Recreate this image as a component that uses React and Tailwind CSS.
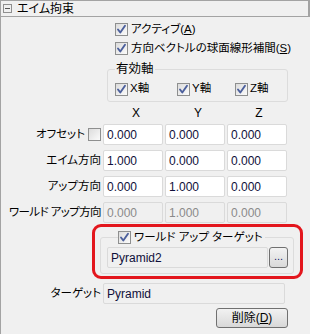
import React from 'react';

const font = { fontFamily: '"Liberation Sans", "Noto Sans CJK JP", sans-serif' };

function Check({ checked = true }) {
  return (
    <span className="inline-flex w-[13px] h-[13px] shrink-0 items-center justify-center border border-[#8e8f8f] bg-gradient-to-br from-[#dcdcdc] to-[#fbfbfb]">
      {checked && (
        <svg width="11" height="11" viewBox="0 0 11 11">
          <path d="M2 5.5 L4.3 8.5 L9 1.8" fill="none" stroke="#4b5f9c" strokeWidth="1.9" strokeLinecap="round" strokeLinejoin="round" />
        </svg>
      )}
    </span>
  );
}

function Field({ value, disabled }) {
  return (
    <div className={`w-[60px] h-[21px] flex items-center pl-[3px] border border-[#dadada] rounded-[2px] text-[12px] ${disabled ? 'bg-[#f0f0f0] text-[#8a8a8a]' : 'bg-white text-[#0f0f3a]'}`}>
      {value}
    </div>
  );
}

const rows = [
  { label: 'オフセット', values: ['0.000', '0.000', '0.000'], check: true },
  { label: 'エイム方向', values: ['1.000', '0.000', '0.000'] },
  { label: 'アップ方向', values: ['0.000', '1.000', '0.000'] },
  { label: 'ワールド アップ方向', values: ['0.000', '1.000', '0.000'], disabled: true },
];

export default function App() {
  return (
    <div className="relative w-[310px] h-[334px] bg-[#f0f0f0] text-[11.5px] text-black overflow-hidden [font-feature-settings:'palt']" style={font}>
      {/* header */}
      <div className="h-[17px] w-[310px] border border-r-2 border-[#a3a3a3] flex items-center">
        <span className="ml-[2px] w-[9px] h-[9px] border border-[#8f8f8f] flex items-center justify-center">
          <span className="w-[5px] h-px bg-[#555]" />
        </span>
        <span className="ml-[5px] leading-none text-[12px]">エイム拘束</span>
      </div>

      {/* body */}
      <div className="h-[317px] border-l border-[#a3a3a3] flex flex-col">
        <div className="mt-[3px] h-[19px] flex items-center pl-[114px] gap-[3px]">
          <Check />
          <span>アクティブ(<span className="underline">A</span>)</span>
        </div>
        <div className="h-[19px] flex items-center pl-[114px] gap-[3px]">
          <Check />
          <span>方向ベクトルの球面線形補間(<span className="underline">S</span>)</span>
        </div>

        <fieldset className="ml-[106px] mt-[3px] w-[181px] h-[41px] border border-[#dcdcdc] rounded-[3px] pl-[7px]">
          <legend className="px-[1px] leading-[16px] text-[12.5px]">有効軸</legend>
          <div className="flex items-center h-[24px]">
            <div className="flex items-center gap-[2px] w-[62px]">
              <Check />
              <span>X軸</span>
            </div>
            <div className="flex items-center gap-[2px] w-[58px]">
              <Check />
              <span>Y軸</span>
            </div>
            <div className="flex items-center gap-[2px]">
              <Check />
              <span>Z軸</span>
            </div>
          </div>
        </fieldset>

        <div className="mt-[2px] h-[18px] flex items-center pl-[104px] text-[12px]">
          <span className="w-[62px] text-center">X</span>
          <span className="w-[62px] text-center">Y</span>
          <span className="w-[60px] text-center">Z</span>
        </div>

        <div className="mt-[2px] flex flex-col gap-[5px]">
          {rows.map((r) => (
            <div key={r.label} className="flex items-center h-[21px]">
              <div className="w-[102px] flex items-center justify-end gap-[3px] pr-[2px] whitespace-nowrap">
                <span className={r.disabled ? 'tracking-[-0.6px]' : ''}>{r.label}</span>
                {r.check && <Check checked={false} />}
              </div>
              <div className="flex gap-[2px]">
                {r.values.map((v, i) => (
                  <Field key={i} value={v} disabled={r.disabled} />
                ))}
              </div>
            </div>
          ))}
        </div>

        <fieldset className="ml-[99px] mt-[7px] w-[194px] h-[44px] border border-[#dcdcdc] rounded-[3px] pl-[6px]">
          <legend className="ml-[11px] pr-[2px] flex items-center gap-[3px] leading-[14px]">
            <Check />
            <span>ワールド アップ ターゲット</span>
          </legend>
          <div className="mt-[3px] flex items-center gap-[1px] text-[12px]">
            <div className="w-[161px] h-[21px] border border-[#dadada] rounded-[2px] flex items-center pl-[3px] text-[#0f0f3a]">Pyramid2</div>
            <button className="w-[19px] h-[21px] border border-[#707070] rounded-[3px] bg-gradient-to-b from-[#f3f3f3] to-[#d9d9d9] text-[#1a1a6e] text-[11px] leading-none flex items-end justify-center pb-[5px]">...</button>
          </div>
        </fieldset>

        <div className="mt-[9px] flex items-center h-[21px]">
          <span className="w-[102px] text-right pr-[2px]">ターゲット</span>
          <div className="w-[182px] h-[21px] border border-[#dadada] rounded-[2px] flex items-center pl-[3px] text-[12px] text-[#0f0f3a]">Pyramid</div>
        </div>

        <div className="mt-[4px] flex justify-end pr-[22px]">
          <button className="w-[72px] h-[20px] border border-[#707070] rounded-[3px] bg-gradient-to-b from-[#f2f2f2] to-[#d8d8d8] flex items-center justify-center leading-none text-[12px]">
            削除(<span className="underline">D</span>)
          </button>
        </div>
      </div>

      {/* red annotation */}
      <div className="absolute left-[92px] top-[224px] w-[211px] h-[55px] border-[3px] border-[#e3161d] rounded-[9px] pointer-events-none" />
    </div>
  );
}
